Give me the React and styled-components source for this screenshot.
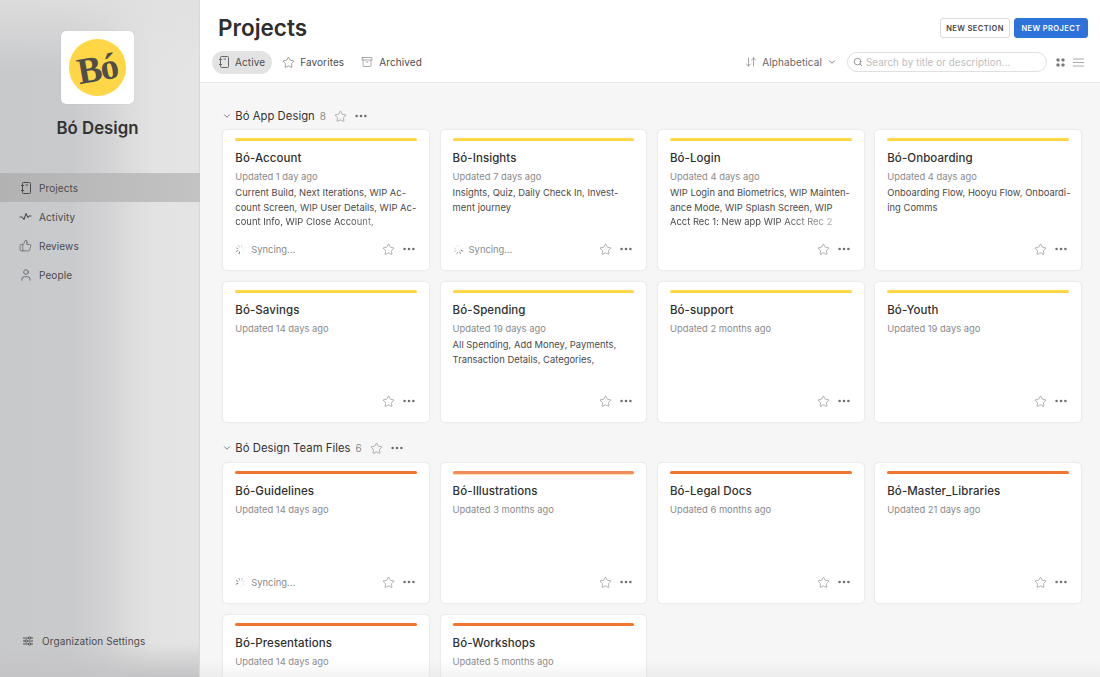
import React from "react";
import styled, { createGlobalStyle } from "styled-components";
import { Star, Archive, ThumbsUp, User, Search, ChevronDown, ArrowDownUp } from "lucide-react";

const Global = createGlobalStyle`
  html, body { margin: 0; padding: 0; height: 100%; overflow: hidden; }
  body { font-family: Inter, "Noto Sans", sans-serif; color: #333; -webkit-font-smoothing: antialiased; }
  * { box-sizing: border-box; }
`;

const Page = styled.div`
  position: relative; display: flex; width: 1100px; height: 677px; overflow: hidden; background: #f6f6f6;
`;
const Sidebar = styled.aside`
  width: 200px; flex: none; height: 677px; display: flex; flex-direction: column; align-items: stretch;
  border-right: 1px solid #d8d8d8; padding-top: 31px;
  background:
    linear-gradient(180deg, rgba(224,224,224,.85) 0, rgba(224,224,224,0) 70px),
    linear-gradient(0deg, rgba(196,196,198,1) 0, rgba(196,196,198,0) 34px),
    linear-gradient(90deg, #c8c9cb 0, #c9cacc 70px, #d2d2d4 105px, #dcdcdc 130px, #e3e3e3 155px, #e4e4e4 200px);
`;
const LogoBox = styled.div`
  width: 73px; height: 73px; margin-left: 61px; background: #fff; border-radius: 5px;
  display: flex; align-items: center; justify-content: center; box-shadow: 0 0 1px rgba(0,0,0,.2);
`;
const LogoCircle = styled.div`
  width: 57px; height: 57px; border-radius: 50%; background: #ffd746;
  display: flex; align-items: center; justify-content: center;
`;
const LogoText = styled.span`
  font-family: "Liberation Serif", serif; font-weight: 700; font-size: 37px; color: #4f4e4c;
  transform: rotate(-10deg); letter-spacing: -1.5px; margin-top: 1px;
`;
const OrgName = styled.div`
  margin-top: 14px; width: 195px; text-align: center; font-size: 16.8px; line-height: 20px; font-weight: 600; color: #333;
`;
const Nav = styled.nav`
  margin-top: 35px; margin-right: -1px; display: flex; flex-direction: column;
`;
const NavItem = styled.div`
  height: 29px; display: grid; grid-template-columns: 15px 1fr; column-gap: 6px; align-items: center; padding-left: 18px;
  font-size: 10px; color: #4c4c4c; letter-spacing: .1px;
  background: ${p => (p.$active ? "linear-gradient(90deg,#b2b2b3,#c3c3c3)" : "transparent")};
  svg { color: #4c4c4c; justify-self: center; }
`;
const SettingsRow = styled.div`
  margin-top: auto; margin-bottom: 30px; padding-left: 22px; display: flex; align-items: center; gap: 8px;
  font-size: 10px; color: #4c4c4c; letter-spacing: .1px;
`;
const Main = styled.main`
  flex: 1; min-width: 0; display: flex; flex-direction: column;
`;
const Header = styled.header`
  height: 83px; flex: none; background: #fff; border-bottom: 1px solid #e8e8e8; padding: 15px 12px 0 12px;
  display: flex; flex-direction: column;
`;
const TopRow = styled.div`
  display: flex; justify-content: space-between; align-items: center; height: 26px;
`;
const Title = styled.h1`
  margin: 0 0 0 6px; font-size: 22.5px; line-height: 26px; font-weight: 600; color: #2e2e2e;
`;
const Actions = styled.div`
  display: flex; gap: 4px;
`;
const Button = styled.button`
  height: 20px; padding: 0; border-radius: 3px; font: 600 7.5px Inter, sans-serif; letter-spacing: .4px; white-space: nowrap;
  border: 1px solid ${p => (p.$primary ? "#2e73d9" : "#dcdcdc")};
  background: ${p => (p.$primary ? "#2e73d9" : "#fff")}; color: ${p => (p.$primary ? "#fff" : "#444")};
  width: ${p => p.$w}px;
`;
const ToolRow = styled.div`
  display: flex; align-items: center; margin-top: 10px; height: 22px;
`;
const Tab = styled.div`
  height: 23px; display: flex; align-items: center; gap: ${p => p.$gap || 6}px; padding: 0 7px; border-radius: 12px; font-size: 10px; color: #4c4c4c;
  margin-right: ${p => p.$mr || 0}px; letter-spacing: .1px;
  background: ${p => (p.$active ? "#e3e3e3" : "transparent")};
  svg { color: #666; flex: none; }
`;
const Sort = styled.div`
  margin-left: auto; display: flex; align-items: center; gap: 5px; font-size: 10px; color: #666; letter-spacing: .1px;
  svg { color: #666; }
`;
const SearchBox = styled.div`
  width: 200px; height: 20px; margin-left: 10px; border: 1px solid #e0e0e0; border-radius: 10px; display: flex; align-items: center;
  gap: 3px; padding-left: 5px; font-size: 9.8px; color: #bdbdbd; letter-spacing: .08px; white-space: nowrap;
  svg { color: #777; flex: none; }
`;
const ViewIcons = styled.div`
  margin-left: 9px; margin-right: 4px; display: flex; gap: 8px; align-items: center;
`;
const Body = styled.div`
  flex: 1; padding: 25px 19px 0 23.3px; overflow: hidden;
`;
const SectionHead = styled.div`
  height: 16px; display: flex; align-items: center; font-size: 11.25px; color: #333; letter-spacing: .05px; margin-top: ${p => p.$mt || 0}px;
  margin-left: -1px;
  svg { flex: none; }
`;
const Count = styled.span`
  margin-left: 5px; color: #8a8a8a; font-size: 10px;
`;
const StarWrap = styled.span`
  display: inline-flex; margin-left: ${p => p.$ml}px; color: #858585;
`;
const DotsWrap = styled.span`
  display: inline-flex; margin-left: ${p => p.$ml}px;
`;
const Grid = styled.div`
  display: grid; grid-template-columns: repeat(4, 205.7px); column-gap: 11.63px; row-gap: 12px; margin-top: ${p => p.$mt}px;
`;
const Card = styled.article`
  height: 140px; background: #fff; border-radius: 4px; box-shadow: 0 0 2px rgba(0,0,0,.16); padding: 8px 12px 0 12px;
  display: flex; flex-direction: column;
`;
const Bar = styled.div`
  height: 3px; border-radius: 2px; flex: none; background: ${p => p.$color};
  box-shadow: ${p => (p.$edge ? "0 1px 0 rgba(250,214,140,.7)" : "none")};
`;
const CardTitle = styled.div`
  margin-top: 10px; font-size: 11.5px; line-height: 14px; font-weight: 500; color: #2f2f2f; letter-spacing: .08px;
`;
const Updated = styled.div`
  margin-top: 5px; font-size: 9.4px; line-height: 13px; color: #8a8a8a;
`;
const Desc = styled.div`
  margin-top: 3px; font-size: 9.4px; line-height: 14.6px; color: #4a4a4a; letter-spacing: .02px;
`;
const Line = styled.div`
  white-space: nowrap;
  ${p => p.$fade && "width: 100%; -webkit-mask-image: linear-gradient(90deg,#000 60%,rgba(0,0,0,.25) 100%); mask-image: linear-gradient(90deg,#000 60%,rgba(0,0,0,.25) 100%);"}
`;
const CardFoot = styled.div`
  margin-top: auto; margin-bottom: 14px; height: 14px; display: flex; align-items: center; font-size: 9.4px; color: #8a8a8a;
`;
const Sync = styled.div`
  display: flex; align-items: center; gap: 5px;
`;
const FootIcons = styled.div`
  margin-left: auto; display: flex; align-items: center; gap: 8px; color: #858585; margin-right: 2px;
`;
const BottomFade = styled.div`
  position: absolute; left: 200px; right: 0; bottom: 0; height: 16px; pointer-events: none;
  background: linear-gradient(180deg, rgba(205,205,205,0), rgba(205,205,205,.25));
`;

const Notebook = ({ w = 10, h = 12 }) => (
  <svg width={w} height={h} viewBox="0 0 10 12" fill="none" stroke="currentColor" strokeWidth="1">
    <rect x="1.5" y="0.5" width="8" height="11" rx="1" />
    <path d="M0 3.5h3M0 8.5h3M4.5 3h2.5" />
  </svg>
);
const ActivityIcon = () => (
  <svg width="13" height="13" viewBox="0 0 13 13" fill="none" stroke="currentColor" strokeWidth="1.05" strokeLinejoin="round">
    <path d="M.5 7H3L5 9.5 7 3.5 9 7.5 10 6h2.5" />
  </svg>
);
const Sliders = () => (
  <svg width="12" height="12" viewBox="0 0 12 12" fill="none" stroke="#505050" strokeWidth="1">
    <path d="M1 3h5.5M9 3h2M1 6h2M5.5 6H11M1 9h5.5M9 9h2" />
    <circle cx="7.7" cy="3" r="1.2" /><circle cx="4.2" cy="6" r="1.2" /><circle cx="7.7" cy="9" r="1.2" />
  </svg>
);
const Dots = ({ c = "#6e6e6e" }) => (
  <svg width="12" height="4" viewBox="0 0 12 4" fill={c}>
    <circle cx="1.6" cy="2" r="1.3" /><circle cx="6" cy="2" r="1.3" /><circle cx="10.4" cy="2" r="1.3" />
  </svg>
);
const Spinner = ({ rot = 0 }) => {
  const angles = [0, 45, 90, 135, 180, 225, 270, 315];
  return (
    <svg width="11" height="11" viewBox="0 0 12 12" stroke="#666" strokeWidth="1" strokeLinecap="round">
      {angles.map((a, i) => (
        <line key={a} x1="6" y1="1" x2="6" y2="3" opacity={[1, 0.8, 0.6, 0.4, 0.25, 0.15, 0.1, 0.05][i]}
          transform={`rotate(${a + rot} 6 6)`} />
      ))}
    </svg>
  );
};
const GridIcon = () => (
  <svg width="9" height="9" viewBox="0 0 9 9" fill="#777">
    <rect x="0.5" y="0.5" width="3" height="3" rx=".8" /><rect x="5.5" y="0.5" width="3" height="3" rx=".8" />
    <rect x="0.5" y="5.5" width="3" height="3" rx=".8" /><rect x="5.5" y="5.5" width="3" height="3" rx=".8" />
  </svg>
);
const ListIcon = () => (
  <svg width="11" height="9" viewBox="0 0 11 9" stroke="#aaa" strokeWidth="1">
    <path d="M0 1h11M0 4.5h11M0 8h11" />
  </svg>
);

const Y = "#ffd746", O = "#f07430";
const appCards = [
  { t: "Bó-Account", u: "Updated 1 day ago", d: ["Current Build, Next Iterations, WIP Ac-", "count Screen, WIP User Details, WIP Ac-", "count Info, WIP Close Account,"], fade: true, sync: 200 },
  { t: "Bó-Insights", u: "Updated 7 days ago", d: ["Insights, Quiz, Daily Check In, Invest-", "ment journey"], sync: 110 },
  { t: "Bó-Login", u: "Updated 4 days ago", d: ["WIP Login and Biometrics, WIP Mainten-", "ance Mode, WIP Splash Screen, WIP", "Acct Rec 1: New app WIP Acct Rec 2"], fade: true },
  { t: "Bó-Onboarding", u: "Updated 4 days ago", d: ["Onboarding Flow, Hooyu Flow, Onboardi-", "ing Comms"] },
  { t: "Bó-Savings", u: "Updated 14 days ago" },
  { t: "Bó-Spending", u: "Updated 19 days ago", d: ["All Spending, Add Money, Payments,", "Transaction Details, Categories,"] },
  { t: "Bó-support", u: "Updated 2 months ago" },
  { t: "Bó-Youth", u: "Updated 19 days ago" },
];
const teamCards = [
  { t: "Bó-Guidelines", u: "Updated 14 days ago", sync: 250 },
  { t: "Bó-Illustrations", u: "Updated 3 months ago", bar: "#ef8e5c" },
  { t: "Bó-Legal Docs", u: "Updated 6 months ago" },
  { t: "Bó-Master_Libraries", u: "Updated 21 days ago" },
  { t: "Bó-Presentations", u: "Updated 14 days ago" },
  { t: "Bó-Workshops", u: "Updated 5 months ago" },
];

const ProjectCard = ({ c, color }) => (
  <Card>
    <Bar $color={c.bar || color} $edge={!!c.bar} />
    <CardTitle>{c.t}</CardTitle>
    <Updated>{c.u}</Updated>
    {c.d && (
      <Desc>
        {c.d.map((l, i) => <Line key={l} $fade={c.fade && i === c.d.length - 1}>{l}</Line>)}
      </Desc>
    )}
    <CardFoot>
      {c.sync != null && <Sync><Spinner rot={c.sync} />Syncing...</Sync>}
      <FootIcons><Star size={13} strokeWidth={1.15} /><Dots /></FootIcons>
    </CardFoot>
  </Card>
);

const Section = ({ name, count, cards, color, mt, gridMt }) => (
  <>
    <SectionHead $mt={mt}>
      <ChevronDown size={10} color="#666" style={{ marginRight: 3 }} />
      <span>{name}</span>
      <Count>{count}</Count>
      <StarWrap $ml={8}><Star size={13} strokeWidth={1.15} /></StarWrap>
      <DotsWrap $ml={8}><Dots /></DotsWrap>
    </SectionHead>
    <Grid $mt={gridMt}>{cards.map(c => <ProjectCard key={c.t} c={c} color={color} />)}</Grid>
  </>
);

export default function App() {
  return (
    <Page>
      <Global />
      <Sidebar>
        <LogoBox><LogoCircle><LogoText>Bó</LogoText></LogoCircle></LogoBox>
        <OrgName>Bó Design</OrgName>
        <Nav>
          <NavItem $active><Notebook />Projects</NavItem>
          <NavItem><ActivityIcon />Activity</NavItem>
          <NavItem><ThumbsUp size={13} strokeWidth={1.1} />Reviews</NavItem>
          <NavItem><User size={14} strokeWidth={1.2} />People</NavItem>
        </Nav>
        <SettingsRow><Sliders />Organization Settings</SettingsRow>
      </Sidebar>
      <Main>
        <Header>
          <TopRow>
            <Title>Projects</Title>
            <Actions>
              <Button $w={70}>NEW SECTION</Button>
              <Button $primary $w={74}>NEW PROJECT</Button>
            </Actions>
          </TopRow>
          <ToolRow>
            <Tab $active $mr={3}><Notebook />Active</Tab>
            <Tab $mr={3} $gap={5}><Star size={13} strokeWidth={1.1} />Favorites</Tab>
            <Tab><Archive size={12} strokeWidth={1.1} />Archived</Tab>
            <Sort><ArrowDownUp size={12} strokeWidth={1.2} />Alphabetical<ChevronDown size={10} /></Sort>
            <SearchBox><Search size={10} strokeWidth={1.8} />Search by title or description...</SearchBox>
            <ViewIcons><GridIcon /><ListIcon /></ViewIcons>
          </ToolRow>
        </Header>
        <Body>
          <Section name="Bó App Design" count="8" cards={appCards} color={Y} gridMt={6} />
          <Section name="Bó Design Team Files" count="6" cards={teamCards} color={O} mt={18} gridMt={7} />
        </Body>
      </Main>
      <BottomFade />
    </Page>
  );
}
